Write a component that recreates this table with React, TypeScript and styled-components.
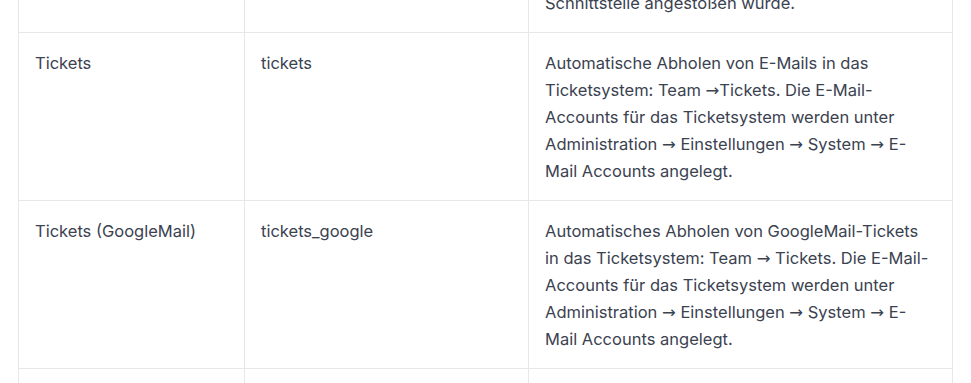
import React from 'react';
import styled, { createGlobalStyle } from 'styled-components';

type Job = {
  name: string;
  key: string;
  description: React.ReactNode;
};

const Arrow = styled.span`
  font-family: "DejaVu Sans", sans-serif;
  font-size: 16.5px;
  line-height: 0;
`;

const A = () => <Arrow>{'\u2192'}</Arrow>;

const jobs: Job[] = [
  {
    name: 'Schnittstelle',
    key: 'interface',
    description: (
      <>
        Zeigt an, wann zuletzt die
        <br />
        Schnittstelle angestoßen wurde.
      </>
    ),
  },
  {
    name: 'Tickets',
    key: 'tickets',
    description: (
      <>
        Automatische Abholen von E-Mails in das Ticketsystem: Team <A />
        Tickets. Die E-Mail-Accounts für das Ticketsystem werden unter Administration <A /> Einstellungen{' '}
        <A /> System <A /> E-Mail Accounts angelegt.
      </>
    ),
  },
  {
    name: 'Tickets (GoogleMail)',
    key: 'tickets_google',
    description: (
      <>
        Automatisches Abholen von GoogleMail-Tickets in das Ticketsystem: Team <A /> Tickets. Die E-Mail-Accounts
        für das Ticketsystem werden unter Administration <A /> Einstellungen <A /> System <A /> E-Mail Accounts
        angelegt.
      </>
    ),
  },
  {
    name: 'Newsletter',
    key: 'newsletter',
    description: 'Versendet geplante Newsletter an die hinterlegten Empfänger.',
  },
];

const App: React.FC = () => {
  return (
    <>
      <GlobalStyle />
      <Page>
        <JobTable>
          <colgroup>
            <col style={{ width: 226 }} />
            <col style={{ width: 284 }} />
            <col />
          </colgroup>
          <tbody>
            {jobs.map((job) => (
              <Row key={job.key}>
                <Cell>{job.name}</Cell>
                <Cell>{job.key}</Cell>
                <Cell>{job.description}</Cell>
              </Row>
            ))}
          </tbody>
        </JobTable>
      </Page>
    </>
  );
};

const GlobalStyle = createGlobalStyle`
  html, body {
    margin: 0;
    padding: 0;
    background: #ffffff;
  }
  body {
    font-family: Inter, "Noto Sans", sans-serif;
    color: #3b4250;
    -webkit-font-smoothing: antialiased;
  }
`;

const Page = styled.div`
  padding: 0 18px;
  overflow: hidden;
  height: 383px;
`;

const JobTable = styled.table`
  width: 935px;
  margin-top: -55px;
  border-collapse: collapse;
  table-layout: fixed;
  border: 1px solid #e5e7eb;
`;

const Row = styled.tr`
  border-bottom: 1px solid #e5e7eb;
`;

const Cell = styled.td`
  padding: 17px 16px 15px;
  border-left: 1px solid #e5e7eb;
  vertical-align: top;
  font-size: 16.5px;
  line-height: 27px;
  color: #3b4250;
`;

export default App;
